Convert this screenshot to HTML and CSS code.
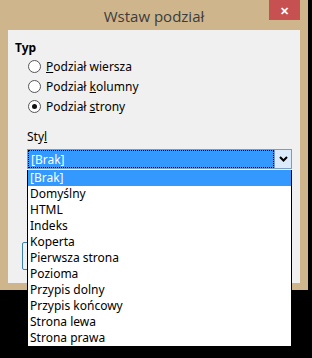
FILE: index.html
```html
<!DOCTYPE html>
<html lang="pl">
<head>
    <meta charset="UTF-8">
    <title>Wstaw podział</title>
    <link rel="stylesheet" href="styles.css">
</head>
<body>
    <div class="window">
        <div class="titlebar">
            <span class="title">Wstaw podział</span>
            <div class="close">&#x2715;</div>
        </div>
        <div class="client">
            <div class="group-title">Typ</div>
            <label class="radio"><span class="dot"></span><span><u>P</u>odział wiersza</span></label>
            <label class="radio"><span class="dot"></span><span>Podział <u>k</u>olumny</span></label>
            <label class="radio"><span class="dot checked"></span><span>Podział <u>s</u>trony</span></label>
            <div class="field-label">Sty<u>l</u></div>
            <div class="combo">
                <div class="combo-value"><span>[Brak]</span></div>
                <div class="combo-btn">
                    <svg width="9" height="6" viewBox="0 0 9 6"><path d="M1 1 L4.5 4.5 L8 1" fill="none" stroke="#000" stroke-width="2"/></svg>
                </div>
            </div>
            <div class="hidden-btn"></div>
        </div>
        <ul class="list">
            <li class="selected">[Brak]</li>
            <li>Domyślny</li>
            <li>HTML</li>
            <li>Indeks</li>
            <li>Koperta</li>
            <li>Pierwsza strona</li>
            <li>Pozioma</li>
            <li>Przypis dolny</li>
            <li>Przypis końcowy</li>
            <li>Strona lewa</li>
            <li>Strona prawa</li>
        </ul>
    </div>
</body>
</html>
```

FILE: styles.css
```css
html {
    background: #000;
    min-height: 358px;
}

body {
    margin: 0;
    min-height: 358px;
    background: #000;
    font-family: 'Noto Sans', sans-serif;
    font-size: 12px;
    color: #000;
}

.window {
    position: relative;
    width: 308px;
    height: 290px;
    background: #cfb58c;
}

.titlebar {
    height: 30px;
    display: flex;
    justify-content: center;
    align-items: center;
    position: relative;
}

.title {
    font-family: 'Open Sans', sans-serif;
    font-size: 15px;
    color: #3c3c3c;
    margin-top: 2px;
}

.close {
    position: absolute;
    top: 0;
    right: 8px;
    width: 31px;
    height: 20px;
    background: #c75050;
    color: #fff;
    font-size: 11px;
    font-weight: bold;
    display: flex;
    justify-content: center;
    align-items: center;
}

.client {
    margin-left: 8px;
    width: 292px;
    height: 253px;
    background: #f0f0f0;
    box-sizing: border-box;
    padding: 9px 0 0 7px;
    position: relative;
}

.group-title {
    font-weight: bold;
    height: 17px;
}

.radio {
    display: flex;
    align-items: center;
    gap: 5px;
    height: 20px;
    margin-left: 13px;
}

.dot {
    width: 11px;
    height: 11px;
    border: 1px solid #555;
    border-radius: 50%;
    background: #fff;
    display: flex;
    justify-content: center;
    align-items: center;
}

.dot.checked::after {
    content: "";
    width: 5px;
    height: 5px;
    border-radius: 50%;
    background: #111;
}

.field-label {
    margin: 12px 0 0 12px;
    height: 19px;
}

.combo {
    margin-left: 12px;
    margin-top: 2px;
    width: 265px;
    height: 20px;
    display: flex;
    background: #3399ff;
    box-sizing: border-box;
    border: 1px solid #7a9cc4;
}

.combo-value {
    flex: 1;
    border: 1px dotted #000;
    color: #fff;
    display: flex;
    align-items: center;
    padding-left: 2px;
}

.combo-btn {
    width: 16px;
    background: #dcebfc;
    border-left: 1px solid #7a9cc4;
    display: flex;
    justify-content: center;
    align-items: center;
}

.hidden-btn {
    position: absolute;
    left: 14px;
    top: 212px;
    width: 80px;
    height: 26px;
    border: 1px solid #3c7fb1;
    border-radius: 2px;
}

.list {
    position: absolute;
    left: 27px;
    top: 170px;
    width: 265px;
    margin: 0;
    padding: 0;
    list-style: none;
    background: #fff;
    border: 1px solid #000;
    border-top: none;
    box-sizing: border-box;
}

.list li {
    height: 16px;
    line-height: 16px;
    padding-left: 2px;
}

.list li.selected {
    background: #3399ff;
    color: #fff;
}
```
